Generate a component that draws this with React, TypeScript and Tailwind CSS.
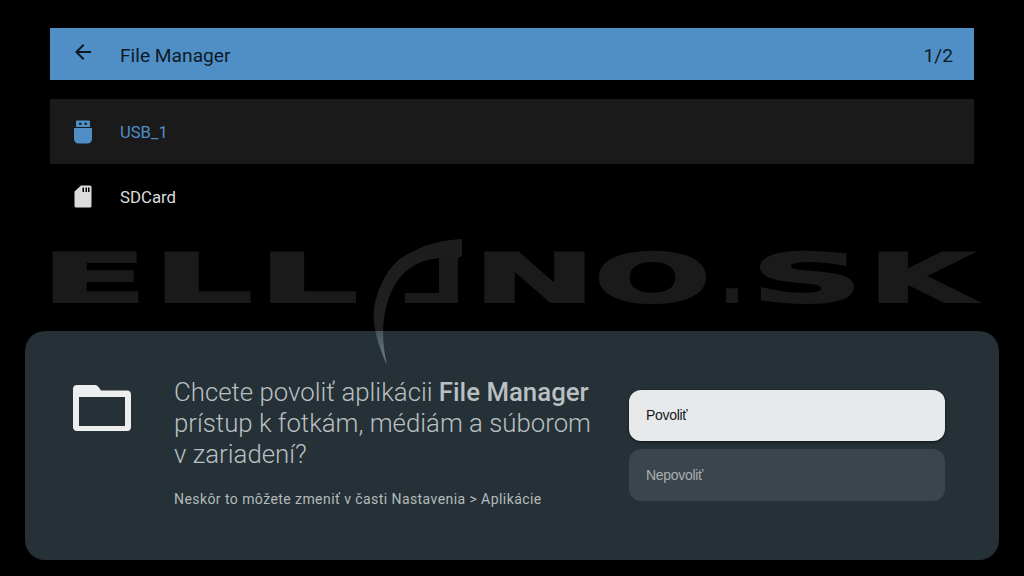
export default function App() {
  const letters: [string, number, number][] = [
    ["E", 40.500, 107], ["L", 152.500, 100], ["L", 258, 100], ["N", 473, 123], ["O", 594, 117], [".", 721, 22], ["S", 751, 112], ["K", 868, 105],
  ];
  return (
    <div className="relative flex h-[576px] w-[1024px] flex-col overflow-hidden bg-black font-['Roboto',sans-serif]">
      <div className="mx-[50px] mt-[28px] flex h-[52px] items-center bg-[#4f8fc6] pr-[21px] text-[#0d1a26]">
        <div className="flex w-[70px] justify-center pr-[4px]">
          <svg width="24" height="24" viewBox="0 0 24 24" fill="currentColor" className="-translate-y-[2px]">
            <path d="M20 11H7.830l5.590-5.590L12 4l-8 8 8 8 1.410-1.410L7.830 13H20v-2z" />
          </svg>
        </div>
        <span className="flex-1 translate-y-[2px] text-[19.200px] leading-none">File Manager</span>
        <span className="translate-y-[2px] text-[19.200px] leading-none">1/2</span>
      </div>

      <div className="mx-[50px] mt-[19px] flex h-[65px] items-center bg-[#1a1a1a] text-[#4f8fc6]">
        <div className="flex w-[70px] justify-center pr-[4px]">
          <svg width="20" height="24" viewBox="0 0 20 24" fill="currentColor">
            <path d="M4 0.500h12a1 1 0 0 1 1 1V7H3V1.500a1 1 0 0 1 1-1z M6 2.800v2h2.500v-2z M11.500 2.800v2h2.500v-2z" fillRule="evenodd" />
            <path d="M1 8h18v11a4.500 4.500 0 0 1-4.500 4.500h-9A4.500 4.500 0 0 1 1 19z" />
          </svg>
        </div>
        <span className="translate-y-[2px] text-[16.600px] leading-none">USB_1</span>
      </div>

      <div className="mx-[50px] flex h-[65px] items-center text-[#dcdcdc]">
        <div className="flex w-[70px] justify-center pr-[4px]">
          <svg width="18" height="23" viewBox="0 0 18 23" fill="currentColor">
            <path fillRule="evenodd" d="M7 0.500h9a1.500 1.500 0 0 1 1.500 1.500v19a1.500 1.500 0 0 1-1.500 1.500H2A1.500 1.500 0 0 1 0.500 21V6.500z M8.500 2.500v4.500h1.500v-4.500z M11.500 2.500v4.500h1.500v-4.500z M14 2.500v4.500h1.500v-4.500z" />
          </svg>
        </div>
        <span className="translate-y-[1px] text-[16.800px] leading-none">SDCard</span>
      </div>

      <div className="mx-[25px] mt-[102px] flex h-[229px] w-[974px] rounded-[20px] bg-[#253136]">
        <div className="w-[149px] pl-[47px] pt-[52px]">
          <svg width="60" height="50" viewBox="0 0 60 50" className="text-[#eceeef]" fill="currentColor">
            <path fillRule="evenodd" d="M5 2h18c1.500 0 2.500 0.800 3.500 2L29 7.500h26c2.500 0 4 1.500 4 4V44c0 2.500-1.500 4-4 4H5c-2.500 0-4-1.500-4-4V6C1 3.500 2.500 2 5 2z M7 14v29h46V14z" />
          </svg>
        </div>
        <div className="w-[455px] pt-[46px] text-[#b9bfc2]">
          <p className="text-[25.800px] font-light leading-[31px]">
            Chcete povoliť aplikácii <span className="font-medium">File Manager</span>
            <br />
            prístup k fotkám, médiám a súborom
            <br />v zariadení?
          </p>
          <p className="mt-[19px] text-[14px] leading-[20px] tracking-[0.43px] text-[#b4babd]">
            Neskôr to môžete zmeniť v časti Nastavenia &gt; Aplikácie
          </p>
        </div>
        <div className="flex w-[316px] flex-col gap-[8px] pt-[59px] font-['Liberation_Sans',sans-serif] text-[14px] tracking-[-0.3px]">
          <div className="flex h-[51px] items-center rounded-[12px] bg-[#e8e9eb] pl-[17px] text-[#15191b] shadow-[0_1px_3px_rgba(0,0,0,0.6)]">Povoliť</div>
          <div className="flex h-[52px] items-center rounded-[12px] bg-[#3b464c] pl-[17px] text-[#a9afb2]">Nepovoliť</div>
        </div>
      </div>

      <svg width="1024" height="576" viewBox="0 0 1024 576" className="pointer-events-none absolute left-0 top-0">
        <defs>
          <linearGradient id="sw" x1="0" y1="238" x2="0" y2="366" gradientUnits="userSpaceOnUse">
            <stop offset="0" stopColor="#1c1c1c" />
            <stop offset="0.725" stopColor="#212121" />
            <stop offset="0.73" stopColor="#45545b" />
            <stop offset="1" stopColor="#75858c" />
          </linearGradient>
        </defs>
        {letters.map(([c, x, w], i) => (
          <text key={i} x={x} y={302} fontFamily="DejaVu Sans" fontWeight="700" fontSize="68" fill="#1a1a1a" stroke="#1a1a1a" strokeWidth="2" textLength={w} lengthAdjust="spacingAndGlyphs">
            {c}
          </text>
        ))}
        <path d="M462 239 V256 L458 258 H439 C418 260 400 270 390 295 C382 315 381 340 387 365 C378 345 372 325 374 310 C378 280 395 258 412 252 C428 243 445 240 462 239 z" fill="url(#sw)" />
        <path d="M439 257 H458 V303 H405 V293 H439 z" fill="#1a1a1a" />
      </svg>
    </div>
  );
}
